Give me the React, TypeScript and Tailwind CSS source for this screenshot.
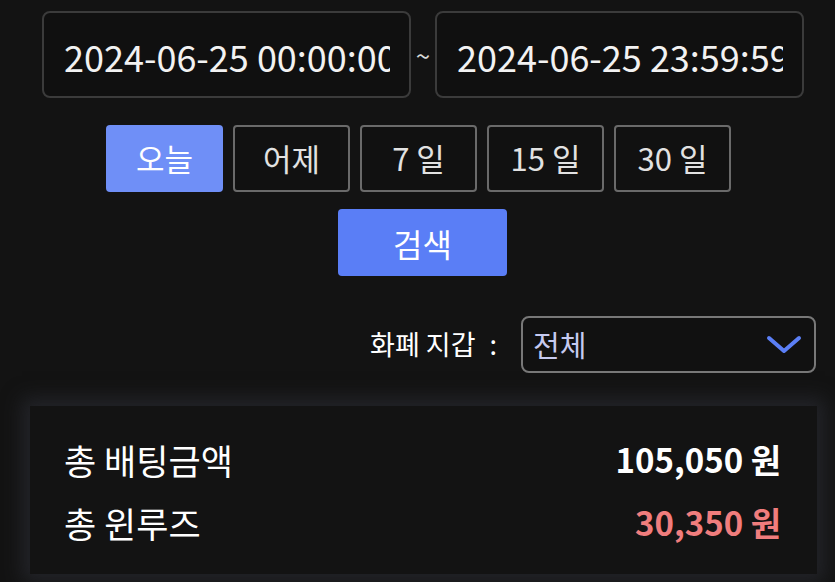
import React from "react";

const font = { fontFamily: '"Noto Sans CJK KR", "Noto Sans", sans-serif' };

function DateBox({ value }: { value: string }) {
  return (
    <div className="w-[369px] h-[87px] rounded-[8px] border-2 border-[#3b3b3b] bg-[#101010] flex items-center pl-[20px] pr-[19px]">
      <div className="overflow-hidden whitespace-nowrap text-[36px] text-[#f2f2f2] leading-none w-full pt-[2px]">{value}</div>
    </div>
  );
}

function RangeBtn({ label, active }: { label: string; active?: boolean }) {
  return (
    <div
      className={
        active
          ? "w-[117px] h-[67px] rounded-[4px] bg-[#6f8ff7] text-white text-[31px] flex items-center justify-center"
          : "w-[117px] h-[67px] rounded-[4px] border-2 border-[#6a6a6a] bg-[#111111] text-[#e2e2e2] text-[31px] flex items-center justify-center"
      }
    >
      {label}
    </div>
  );
}

export default function App() {
  return (
    <div className="w-[835px] h-[582px] overflow-hidden bg-[#131313] flex flex-col" style={font}>
      <div className="flex items-center pl-[42px] pt-[11px]">
        <DateBox value="2024-06-25 00:00:00" />
        <div className="w-[24px] text-center text-[26px] text-[#d8d8d8]">~</div>
        <DateBox value="2024-06-25 23:59:59" />
      </div>

      <div className="flex gap-[10px] pl-[106px] mt-[27px]">
        <RangeBtn label="오늘" active />
        <RangeBtn label="어제" />
        <RangeBtn label="7 일" />
        <RangeBtn label="15 일" />
        <RangeBtn label="30 일" />
      </div>

      <div className="pl-[338px] mt-[17px]">
        <div className="w-[169px] h-[67px] rounded-[4px] bg-[#5a7ef6] text-white text-[32px] flex items-center justify-center">
          검색
        </div>
      </div>

      <div className="flex items-center justify-end pr-[19px] mt-[40px]">
        <div className="text-[27px] text-white">화폐 지갑</div>
        <div className="text-[27px] text-white ml-[14px] mr-[24px]">:</div>
        <div className="w-[295px] h-[57px] rounded-[8px] border-2 border-[#787878] bg-[#111111] flex items-center justify-between pl-[10px] pr-[12px]">
          <span className="text-[29px] text-[#c6caf0]">전체</span>
          <svg width="36" height="20" viewBox="0 0 36 20" fill="none">
            <path d="M3 3 L18 16 L33 3" stroke="#5b7ff6" strokeWidth="4" strokeLinecap="round" strokeLinejoin="round" />
          </svg>
        </div>
      </div>

      <div className="ml-[30px] mr-[18px] mt-[33px] bg-[#131313] shadow-[0_0_18px_8px_rgba(36,37,42,0.95)] pt-[30px] pb-[27px] pl-[34px] pr-[36px] flex flex-col gap-[15px]">
        <div className="flex items-center justify-between h-[48px]">
          <span className="text-[35px] text-white">총 배팅금액</span>
          <span className="text-[33px] font-bold text-white">105,050 원</span>
        </div>
        <div className="flex items-center justify-between h-[48px]">
          <span className="text-[35px] text-white">총 윈루즈</span>
          <span className="text-[33px] font-bold text-[#f07d7d]">30,350 원</span>
        </div>
      </div>
    </div>
  );
}
